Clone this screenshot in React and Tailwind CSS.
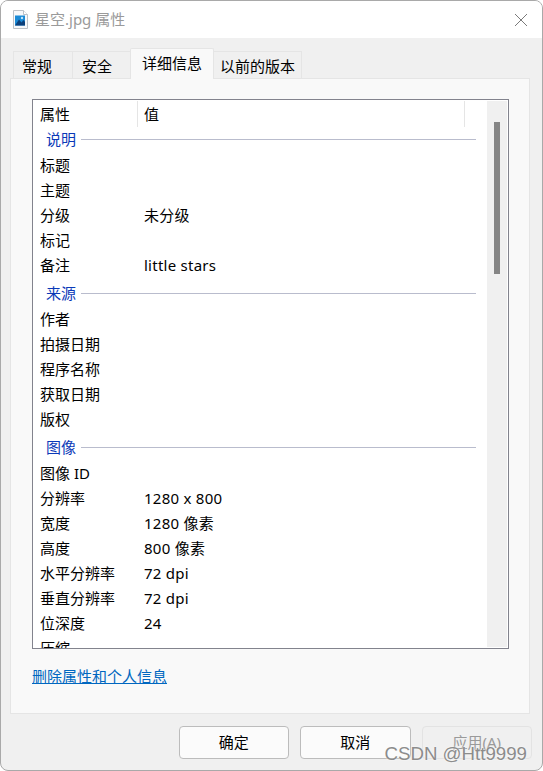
function Row({ k, v }) {
  return (
    <div className="flex h-[25px] items-center whitespace-nowrap text-black">
      <div className="w-[111px] pl-[7px]">{k}</div>
      <div className="tracking-[0.25px]">{v}</div>
    </div>
  );
}

function Group({ title, first }) {
  return (
    <div className={first ? "flex h-[27px] items-center pb-px pl-[13px] pr-[11px]" : "flex h-[29px] items-center pt-[2px] pl-[13px] pr-[11px]"}>
      <span className="text-[#0a39b8]">{title}</span>
      <div className="ml-[5px] h-px flex-1 bg-[#b9bccd]" />
    </div>
  );
}

function Tab({ label, active, className }) {
  return active ? (
    <div className="relative z-10 -mb-px -ml-px flex h-[31px] w-[84px] shrink-0 items-start justify-center rounded-t-[2px] border border-b-0 border-[#e5e5e5] bg-[#f9f9f9] pt-[7px] text-black">
      {label}
    </div>
  ) : (
    <div className={"flex h-[27px] shrink-0 items-center justify-start border border-b-0 border-[#e5e5e5] bg-[#f0f0f0] pt-[2px] text-black " + className}>
      {label}
    </div>
  );
}

function Btn({ label, disabled }) {
  return (
    <div
      className={
        disabled
          ? "flex h-[33px] w-[110.5px] items-center justify-center rounded-[4px] border border-[#e3e3e3] bg-[#f0f0f0] text-[#9a9a9a]"
          : "flex h-[33px] w-[110.5px] items-center justify-center rounded-[4px] border border-[#bcbcbc] bg-[#fbfbfb] text-black"
      }
    >
      {label}
    </div>
  );
}

export default function App() {
  return (
    <div
      className="relative flex h-[771px] w-[543px] flex-col overflow-hidden rounded-t-[8px] rounded-b-[8px] border border-[#a9a9a9] bg-[#f0f0f0] text-[15px] leading-none"
      style={{ fontFamily: '"Noto Sans", "Noto Sans CJK SC", sans-serif' }}
    >
      <div className="flex h-[37px] shrink-0 items-center bg-white pl-[12px] pr-[14px]">
        <svg width="16" height="20" viewBox="0 0 16 20" className="shrink-0">
          <path d="M0.5 0.5h10L14.5 4.5v14H0.5z" fill="#f7f8fa" stroke="#bcc1c7" />
          <path d="M10.5 0.5v4h4" fill="#fff" stroke="#bcc1c7" />
          <rect x="2" y="5.5" width="10" height="10" fill="#1a8ad6" />
          <circle cx="9" cy="8" r="1.2" fill="#bfe4fa" />
          <path d="M2 15.5l4-6 2.5 3L10.5 10l1.5 2v3.5z" fill="#0c3f7a" />
        </svg>
        <span className="ml-[6px] text-[#9a9a9a]">星空.jpg 属性</span>
        <svg width="14" height="14" viewBox="0 0 14 14" className="ml-auto">
          <path d="M1 1l12 12M13 1L1 13" stroke="#7a7a7a" strokeWidth="1" fill="none" />
        </svg>
      </div>

      <div className="mt-[13px] flex h-[27px] shrink-0 items-end pl-[12px]">
        <Tab label="常规" className="w-[60px] pl-[8px]" />
        <Tab label="安全" className="-ml-px w-[59px] pl-[9px]" />
        <Tab label="详细信息" active />
        <Tab label="以前的版本" className="-ml-px w-[89px] pl-[6px]" />
      </div>

      <div className="ml-[9px] mr-[12px] flex h-[636px] shrink-0 flex-col border border-[#e5e5e5] bg-[#f9f9f9] pl-[21px] pr-[20px] pt-[20px]">
        <div className="relative flex h-[550px] shrink-0 overflow-hidden border border-[#82838d] bg-white">
          <div className="min-w-0 flex-1">
            <div className="flex h-[26px] items-start pt-px">
              <div className="flex h-[26px] w-[105px] items-center border-r border-[#e5e5e5] pl-[7px] text-black">属性</div>
              <div className="flex h-[26px] w-[327px] items-center border-r border-[#e5e5e5] pl-[6px] text-black">值</div>
            </div>
            <Group title="说明" first />
            <Row k="标题" />
            <Row k="主题" />
            <Row k="分级" v="未分级" />
            <Row k="标记" />
            <Row k="备注" v="little stars" />
            <Group title="来源" />
            <Row k="作者" />
            <Row k="拍摄日期" />
            <Row k="程序名称" />
            <Row k="获取日期" />
            <Row k="版权" />
            <Group title="图像" />
            <Row k="图像 ID" />
            <Row k="分辨率" v="1280 x 800" />
            <Row k="宽度" v="1280 像素" />
            <Row k="高度" v="800 像素" />
            <Row k="水平分辨率" v="72 dpi" />
            <Row k="垂直分辨率" v="72 dpi" />
            <Row k="位深度" v="24" />
            <Row k="压缩" />
          </div>
          <div className="my-[1px] mr-[1px] w-[20px] shrink-0 bg-[#f0f0f0] pl-[7px] pt-[21px]">
            <div className="h-[152px] w-[6px] bg-[#858585]" />
          </div>
        </div>
        <div className="mt-[20px] self-start text-[#0067c0] underline underline-offset-1">删除属性和个人信息</div>
      </div>

      <div className="mt-[12px] flex justify-end gap-[11px] pr-[10px]">
        <Btn label="确定" />
        <Btn label="取消" />
        <Btn label="应用(A)" disabled />
      </div>

      <div
        className="absolute right-[15px] top-[744px] text-[18.7px] text-[#8c8c8c]"
        style={{ fontFamily: '"Liberation Sans", sans-serif', textShadow: "0 0 2px #fff" }}
      >
        CSDN @Htt9999
      </div>
    </div>
  );
}
